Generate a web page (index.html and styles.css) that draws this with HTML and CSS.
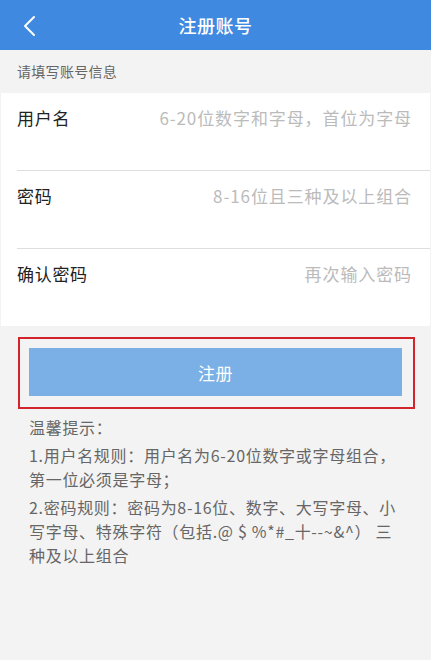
FILE: index.html
```html
<!DOCTYPE html>
<html lang="zh-CN">
<head>
<meta charset="utf-8">
<title>注册账号</title>
<link rel="stylesheet" href="styles.css">
</head>
<body>
<header class="nav">
  <span class="nav-back">
    <svg width="14" height="22" viewBox="0 0 14 22"><path d="M11 2 L2 11 L11 20" fill="none" stroke="#fff" stroke-width="2" stroke-linecap="round" stroke-linejoin="round"/></svg>
  </span>
  <h1 class="nav-title">注册账号</h1>
</header>
<div class="section-label">请填写账号信息</div>
<div class="card">
  <div class="row">
    <span class="row-label">用户名</span>
    <span class="row-placeholder">6-20位数字和字母，首位为字母</span>
  </div>
  <div class="row">
    <span class="row-label">密码</span>
    <span class="row-placeholder">8-16位且三种及以上组合</span>
  </div>
  <div class="row row-last">
    <span class="row-label">确认密码</span>
    <span class="row-placeholder">再次输入密码</span>
  </div>
</div>
<div class="highlight">
  <button class="submit" type="button">注册</button>
</div>
<div class="tips">
  <p class="tip">温馨提示：</p>
  <p class="tip">1.用户名规则：用户名为6-20位数字或字母组合，第一位必须是字母；</p>
  <p class="tip">2.密码规则：密码为8-16位、数字、大写字母、小写字母、特殊字符（包括.@ $ %*#_十--~&amp;^） 三种及以上组合</p>
</div>
</body>
</html>
```
FILE: styles.css
```css
html, body {
  margin: 0;
  padding: 0;
}
body {
  background: #f3f3f3;
  font-family: "Noto Sans CJK TC", "Noto Sans CJK SC", "Noto Sans", sans-serif;
  width: 431px;
  min-height: 660px;
}
.nav {
  height: 50px;
  background: #3f8ae0;
  display: flex;
  align-items: center;
  justify-content: center;
  position: relative;
}
.nav-back {
  position: absolute;
  left: 23px;
  top: 15px;
  width: 14px;
  height: 22px;
  display: flex;
}
.nav-title {
  margin: 0;
  color: #fff;
  font-size: 18px;
  font-weight: 500;
  letter-spacing: 0.5px;
}
.section-label {
  height: 43px;
  line-height: 43px;
  padding-left: 17px;
  font-size: 14px;
  color: #666;
  letter-spacing: 0.3px;
}
.card {
  background: #fff;
  margin: 0 1px 0 1px;
}
.row {
  height: 78px;
  box-sizing: border-box;
  margin-left: 16px;
  padding: 13px 18px 0 0;
  border-bottom: 1px solid #dedede;
  display: flex;
  justify-content: space-between;
  align-items: flex-start;
}
.row-last {
  height: 77px;
  border-bottom: none;
}
.row-label {
  font-size: 17px;
  line-height: 24px;
  color: #222;
  letter-spacing: 0.7px;
}
.row-placeholder {
  font-size: 17px;
  line-height: 24px;
  color: #bbbbbb;
  letter-spacing: 0.9px;
}
.highlight {
  margin: 11px 0 0 18px;
  width: 397px;
  box-sizing: border-box;
  border: 2px solid #d3232b;
  padding: 9px 11px 11px 9px;
}
.submit {
  display: block;
  width: 100%;
  height: 48px;
  border: none;
  background: #7bb0e6;
  color: #fff;
  font-family: inherit;
  font-size: 17px;
  letter-spacing: 0.5px;
  padding: 0;
}
.tips {
  padding: 6px 26px 0 29px;
}
.tip {
  margin: 0 0 4px 0;
  font-size: 16px;
  line-height: 24px;
  color: #666;
  letter-spacing: 0.7px;
}
```
